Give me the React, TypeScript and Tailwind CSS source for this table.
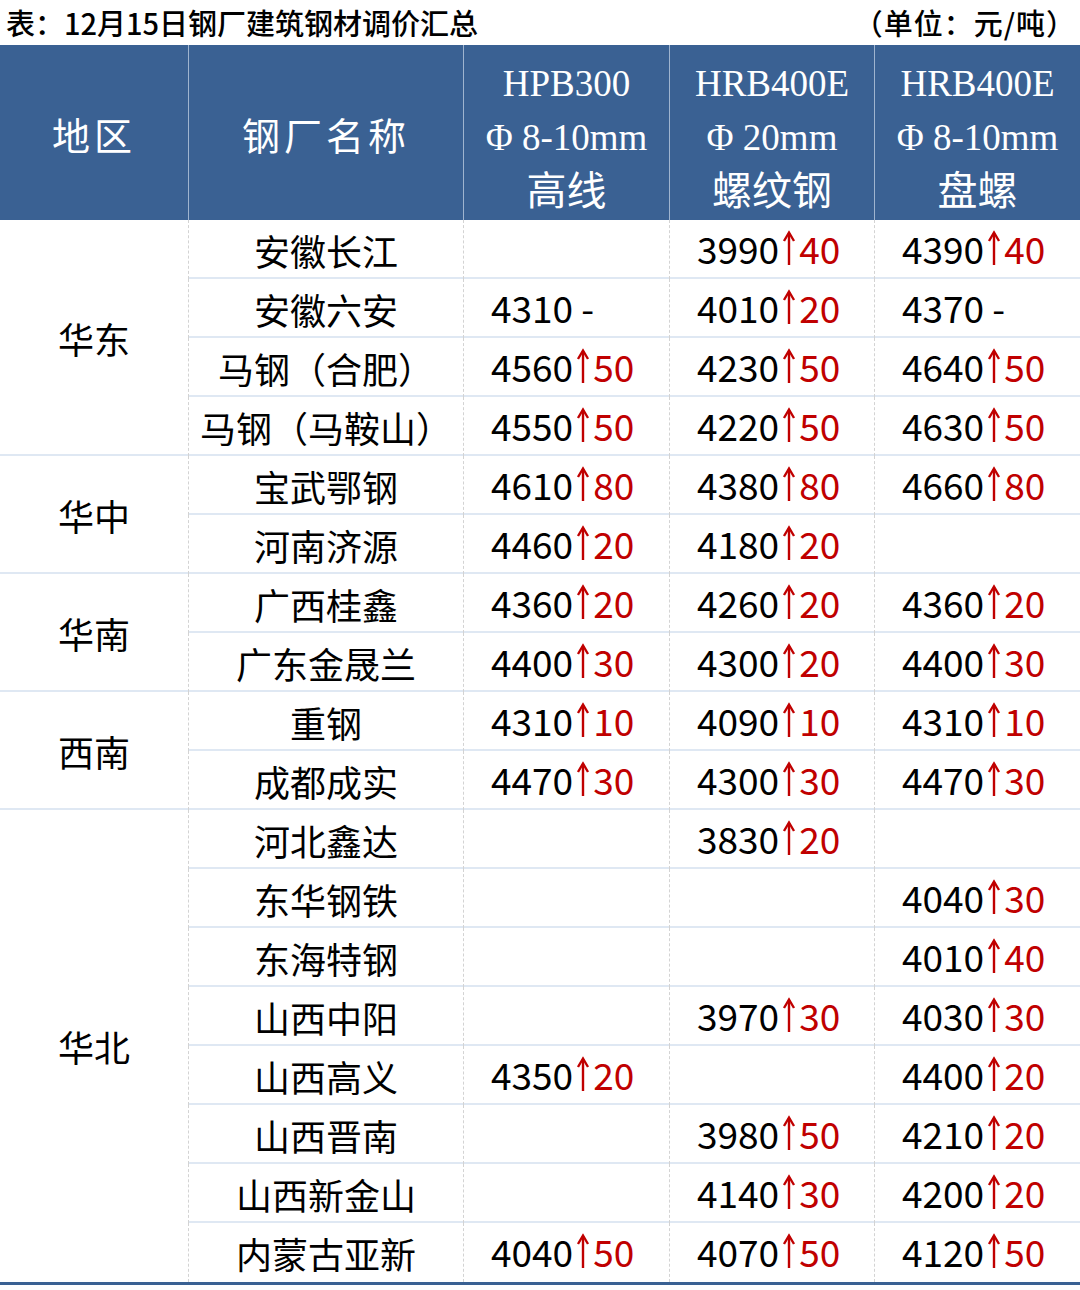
import React from "react";

type Price = { base: string; up?: string; flat?: boolean } | null;

interface Row {
  name: string;
  prices: [Price, Price, Price];
}

interface Region {
  region: string;
  span: string;
  rows: Row[];
}

const p = (base: string, up: string): Price => ({ base, up });
const flat = (base: string): Price => ({ base, flat: true });

const data: Region[] = [
  {
    region: "华东",
    span: "row-span-4",
    rows: [
      { name: "安徽长江", prices: [null, p("3990", "40"), p("4390", "40")] },
      { name: "安徽六安", prices: [flat("4310"), p("4010", "20"), flat("4370")] },
      { name: "马钢（合肥）", prices: [p("4560", "50"), p("4230", "50"), p("4640", "50")] },
      { name: "马钢（马鞍山）", prices: [p("4550", "50"), p("4220", "50"), p("4630", "50")] },
    ],
  },
  {
    region: "华中",
    span: "row-span-2",
    rows: [
      { name: "宝武鄂钢", prices: [p("4610", "80"), p("4380", "80"), p("4660", "80")] },
      { name: "河南济源", prices: [p("4460", "20"), p("4180", "20"), null] },
    ],
  },
  {
    region: "华南",
    span: "row-span-2",
    rows: [
      { name: "广西桂鑫", prices: [p("4360", "20"), p("4260", "20"), p("4360", "20")] },
      { name: "广东金晟兰", prices: [p("4400", "30"), p("4300", "20"), p("4400", "30")] },
    ],
  },
  {
    region: "西南",
    span: "row-span-2",
    rows: [
      { name: "重钢", prices: [p("4310", "10"), p("4090", "10"), p("4310", "10")] },
      { name: "成都成实", prices: [p("4470", "30"), p("4300", "30"), p("4470", "30")] },
    ],
  },
  {
    region: "华北",
    span: "row-span-8",
    rows: [
      { name: "河北鑫达", prices: [null, p("3830", "20"), null] },
      { name: "东华钢铁", prices: [null, null, p("4040", "30")] },
      { name: "东海特钢", prices: [null, null, p("4010", "40")] },
      { name: "山西中阳", prices: [null, p("3970", "30"), p("4030", "30")] },
      { name: "山西高义", prices: [p("4350", "20"), null, p("4400", "20")] },
      { name: "山西晋南", prices: [null, p("3980", "50"), p("4210", "20")] },
      { name: "山西新金山", prices: [null, p("4140", "30"), p("4200", "20")] },
      { name: "内蒙古亚新", prices: [p("4040", "50"), p("4070", "50"), p("4120", "50")] },
    ],
  },
];

const headers = [
  ["HPB300", "Φ 8-10mm", "高线"],
  ["HRB400E", "Φ 20mm", "螺纹钢"],
  ["HRB400E", "Φ 8-10mm", "盘螺"],
];

function UpArrow() {
  return (
    <svg width="20" height="36" viewBox="0 0 20 36" className="shrink-0">
      <path d="M10 3 V35" stroke="#c00000" strokeWidth="2.4" fill="none" />
      <path d="M5 11 L10 2.5 L15 11" stroke="#c00000" strokeWidth="2.4" fill="none" />
    </svg>
  );
}

function PriceCell({ price, last }: { price: Price; last: boolean }) {
  return (
    <div
      className={`flex items-center border-l border-dashed border-[#d3d3d3] pl-[27px] ${
        last ? "" : "shadow-[inset_0_-2px_0_#dfe8f3]"
      }`}
    >
      {price && (
        <span className="-mt-[3px] flex items-center text-[37px] leading-none text-black">
          <span>{price.base}</span>
          {price.flat ? (
            <span className="ml-2">-</span>
          ) : (
            <>
              <UpArrow />
              <span className="text-[#c00000]">{price.up}</span>
            </>
          )}
        </span>
      )}
    </div>
  );
}

export default function App() {
  const total = data.reduce((n, r) => n + r.rows.length, 0);
  let index = 0;

  return (
    <div className="w-[1080px] bg-white font-['Noto_Sans_CJK_SC','Noto_Sans',sans-serif] text-black">
      <div className="flex h-[45px] items-center justify-between pl-[6px] pr-[4px] text-[29px] font-medium leading-none">
        <span>表：12月15日钢厂建筑钢材调价汇总</span>
        <span className="tracking-[1px]">（单位：元/吨）</span>
      </div>

      <div className="grid h-[175px] grid-cols-[188px_275px_206px_205px_206px] bg-[#3a6193] font-['Liberation_Serif','Noto_Sans_CJK_SC',serif] text-white">
        <div className="flex items-center justify-center pt-[10px] text-[38px] tracking-[4px]">地区</div>
        <div className="flex items-center justify-center border-l border-[#9fb4cf] pt-[10px] text-[38px] tracking-[4px]">
          钢厂名称
        </div>
        {headers.map((h, i) => (
          <div
            key={i}
            className="flex flex-col items-center justify-center border-l border-[#9fb4cf] pt-[10px] text-[37px] leading-[54px]"
          >
            <span>{h[0]}</span>
            <span className="whitespace-pre">{h[1]}</span>
            <span className="text-[40px]">{h[2]}</span>
          </div>
        ))}
      </div>

      <div className="grid grid-cols-[188px_275px_206px_205px_206px] grid-rows-[repeat(18,59px)] border-b-[3px] border-[#3a6193]">
        {data.map((r, ri) => (
          <React.Fragment key={r.region}>
            <div
              className={`${r.span} flex items-center justify-center text-[36px] ${
                ri === data.length - 1 ? "" : "shadow-[inset_0_-2px_0_#dfe8f3]"
              }`}
            >
              {r.region}
            </div>
            {r.rows.map((row, k) => {
              index += 1;
              const last = index === total;
              return (
                <React.Fragment key={row.name}>
                  <div
                    className={`${k > 0 ? "col-start-2" : ""} flex items-center justify-center border-l border-dashed border-[#d3d3d3] text-[36px] leading-none ${
                      last ? "" : "shadow-[inset_0_-2px_0_#dfe8f3]"
                    }`}
                  >
                    {row.name}
                  </div>
                  {row.prices.map((pr, j) => (
                    <PriceCell key={j} price={pr} last={last} />
                  ))}
                </React.Fragment>
              );
            })}
          </React.Fragment>
        ))}
      </div>
    </div>
  );
}
